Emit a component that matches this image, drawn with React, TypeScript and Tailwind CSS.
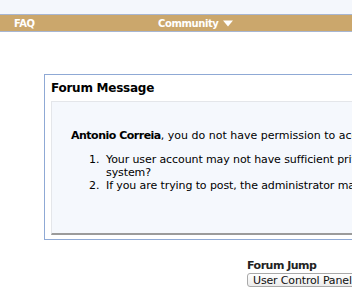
export default function App() {
  return (
    <div className="h-[300px] w-[352px] overflow-hidden bg-white font-['DejaVu_Sans',Verdana,sans-serif] text-[11px] text-black">
      {/* top strip */}
      <div className="h-[14px] bg-[#f4f7fc]" />

      {/* nav bar */}
      <div className="flex h-[18px] items-center border-y border-[#a7b6d2] bg-[#cba76c] text-[10px] font-bold tracking-[-0.4px] text-white">
        <span className="ml-[14px] w-[144px] shrink-0">FAQ</span>
        <span className="flex items-center gap-[5px]">
          Community
          <svg width="10" height="7" viewBox="0 0 10 7">
            <path d="M0 0.5h10L5 6.5z" fill="#ffffff" />
          </svg>
        </span>
      </div>

      {/* forum message panel */}
      <div className="ml-[44px] mt-[42px] w-[420px] border border-[#8fa9d5] pb-[4px]">
        <div className="flex h-[26px] items-center px-[6px] text-[12px] font-bold tracking-[-0.25px]">Forum Message</div>
        <div className="ml-[6px] h-[134px] border-l border-t border-b-2 border-l-[#e4e6ea] border-t-[#e4e6ea] border-b-[#9b9b9b] bg-[#f5f8fd] pl-[19px] pt-[27px] leading-[13px]">
          <p className="whitespace-nowrap">
            <b className="tracking-[-0.5px]">Antonio Correia</b>, you do not have permission to access this page.
          </p>
          <div className="mt-[11px] flex flex-col whitespace-nowrap pl-[18px] tracking-[-0.1px]">
            <div className="flex">
              <span className="w-[17px] shrink-0">1.</span>
              <div>
                <div>Your user account may not have sufficient privileges to access this page.</div>
                <div>system?</div>
              </div>
            </div>
            <div className="flex">
              <span className="w-[17px] shrink-0">2.</span>
              <div>If you are trying to post, the administrator may have disabled your account.</div>
            </div>
          </div>
        </div>
      </div>

      {/* forum jump */}
      <div className="ml-[247px] mt-[19px]">
        <div className="text-[11px] font-bold leading-[13px] tracking-[-0.5px] text-[#222]">Forum Jump</div>
        <div className="mt-[1px] flex h-[14px] w-[140px] items-center rounded-[3px] border border-[#a9a9a9] bg-gradient-to-b from-white to-[#ececec] pl-[5px] text-[11px] leading-none tracking-[-0.15px] text-[#111]">
          User Control Panel
        </div>
      </div>
    </div>
  )
}
